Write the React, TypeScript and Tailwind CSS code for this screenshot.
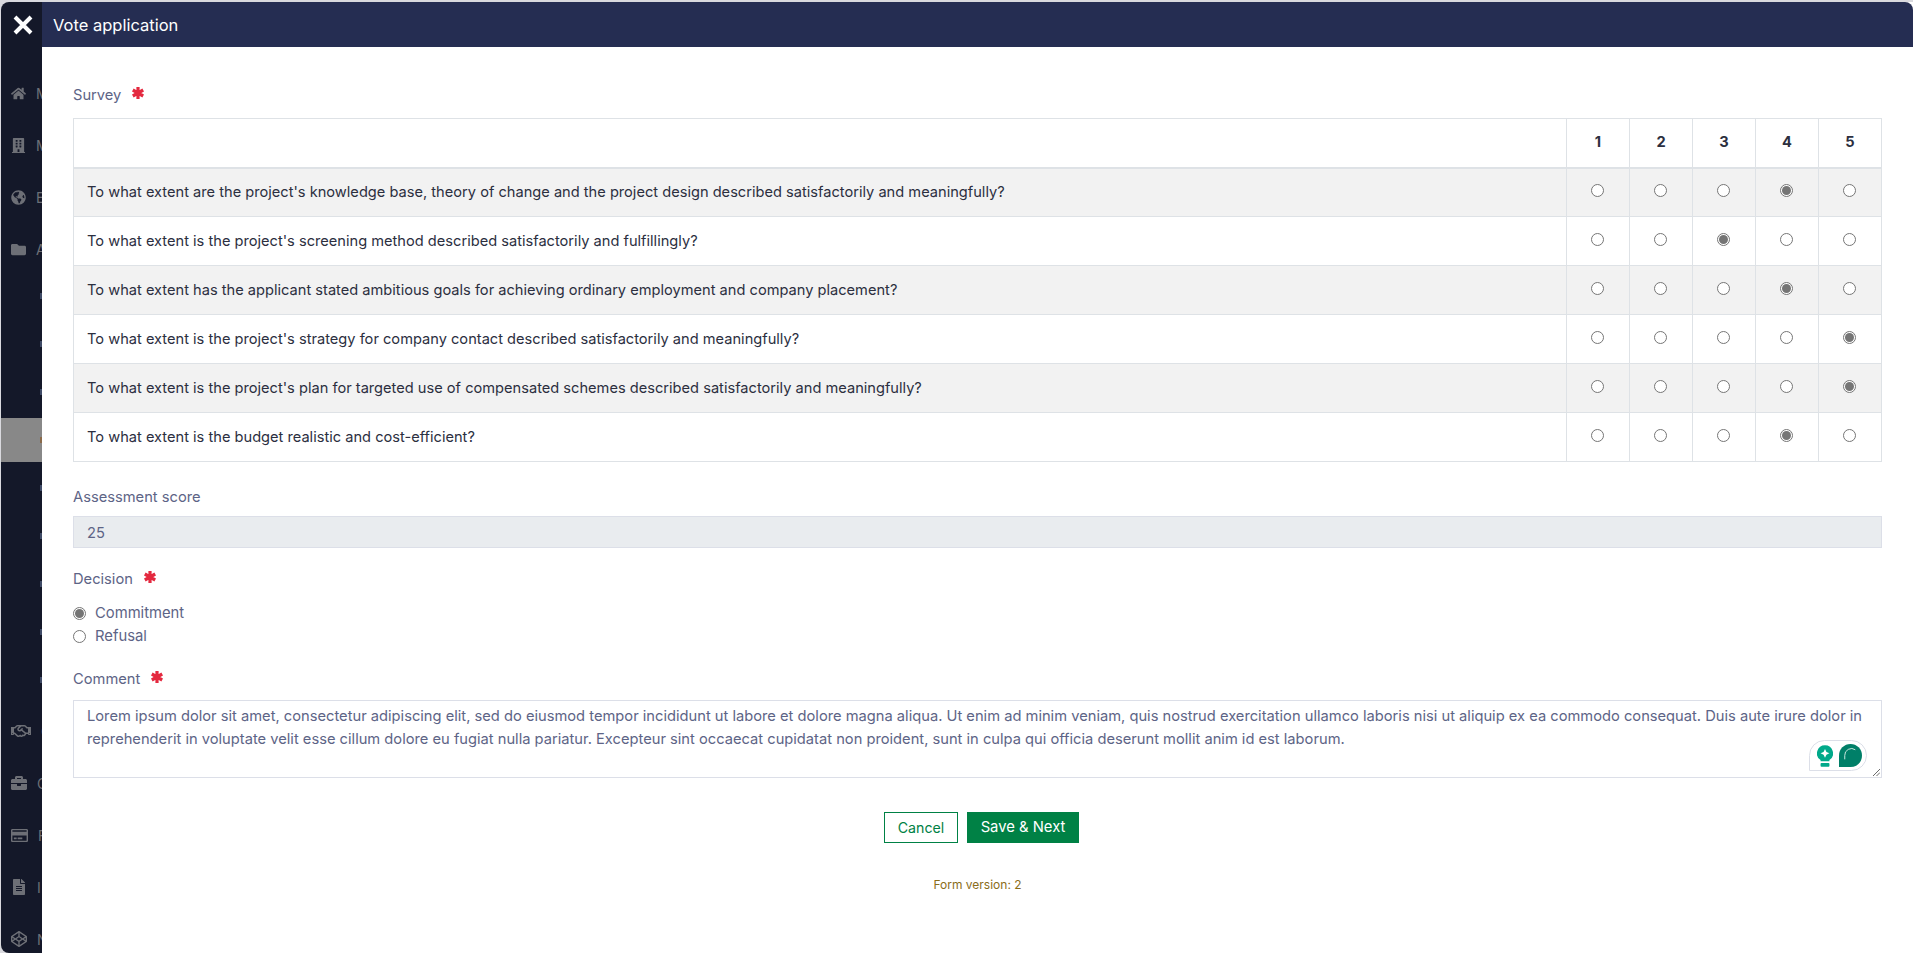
import type { ReactNode } from "react";
import { FaHome, FaBuilding, FaGlobeAmericas, FaFolder, FaRegHandshake, FaBriefcase, FaRegCreditCard, FaFileAlt, FaCodepen } from "react-icons/fa";

const questions = [
  { text: "To what extent are the project's knowledge base, theory of change and the project design described satisfactorily and meaningfully?", value: 4 },
  { text: "To what extent is the project's screening method described satisfactorily and fulfillingly?", value: 3 },
  { text: "To what extent has the applicant stated ambitious goals for achieving ordinary employment and company placement?", value: 4 },
  { text: "To what extent is the project's strategy for company contact described satisfactorily and meaningfully?", value: 5 },
  { text: "To what extent is the project's plan for targeted use of compensated schemes described satisfactorily and meaningfully?", value: 5 },
  { text: "To what extent is the budget realistic and cost-efficient?", value: 4 },
];

const Radio = ({ checked }: { checked?: boolean }) => (
  <span className="inline-flex h-[13px] w-[13px] items-center justify-center rounded-full border border-[#767676] bg-white">
    {checked && <span className="h-[9px] w-[9px] rounded-full bg-[#757575]" />}
  </span>
);

const Label = ({ children, required }: { children: string; required?: boolean }) => (
  <div className="flex h-[21px] items-center text-[14.7px] leading-[21px] text-[#5d6486]">
    <span className="h-[21px] pt-[1px]">{children}</span>
    {required && (
      <svg viewBox="0 0 14 14" className="mb-[4px] ml-[10px] h-[14px] w-[14px]">
        <path d="M7 1V13M1.8 4 12.2 10M12.2 4 1.8 10" stroke="#e4293f" strokeWidth="3.2" />
      </svg>
    )}
  </div>
);

const SideItem = ({ children }: { children: ReactNode }) => (
  <div className="flex h-[52px] shrink-0 items-center gap-[10px] whitespace-nowrap pl-[10px] text-[14px] text-[#6d6f76]">{children}</div>
);

const SubItem = ({ active }: { active?: boolean }) => (
  <div className="flex h-[48px] shrink-0 items-center">
    <div className={`flex h-[44px] w-full items-center justify-end ${active ? "bg-[#888888]" : ""}`}>
      <span className={`h-[6px] w-[2px] ${active ? "bg-[#8a6a4a]" : "bg-[#3f4a66]"}`} />
    </div>
  </div>
);

export default function App() {
  return (
    <div className="flex h-[953px] w-[1913px] overflow-hidden bg-[#d9d9de] pl-[1px] pt-[2px] font-['Inter','Noto_Sans',sans-serif]">
      <aside className="flex w-[41px] shrink-0 flex-col overflow-hidden rounded-l-[8px] bg-[#141829]">
        <div className="flex h-[45px] shrink-0 items-center pl-[12px]">
          <svg viewBox="0 0 20 20" className="h-[20px] w-[20px]">
            <path d="M2 2 18 18M18 2 2 18" stroke="#fff" strokeWidth="4" />
          </svg>
        </div>
        <div className="shrink-0 pt-[20px]">
          <SideItem><FaHome className="h-[15px] w-[15px] shrink-0" />M</SideItem>
          <SideItem><FaBuilding className="h-[15px] w-[15px] shrink-0" />M</SideItem>
          <SideItem><FaGlobeAmericas className="h-[15px] w-[15px] shrink-0" />E</SideItem>
          <SideItem><FaFolder className="h-[15px] w-[15px] shrink-0" />A</SideItem>
        </div>
        <div className="-mt-[3px] mb-[1px] shrink-0">
          {[0, 1, 2, 3, 4, 5, 6, 7, 8].map((i) => (
            <SubItem key={i} active={i === 3} />
          ))}
        </div>
        <SideItem><FaRegHandshake className="h-[20px] w-[20px] shrink-0" />C</SideItem>
        <SideItem><FaBriefcase className="h-[16px] w-[16px] shrink-0" />C</SideItem>
        <SideItem><FaRegCreditCard className="h-[17px] w-[17px] shrink-0" />F</SideItem>
        <SideItem><FaFileAlt className="h-[16px] w-[16px] shrink-0" />I</SideItem>
        <SideItem><FaCodepen className="h-[16px] w-[16px] shrink-0" />N</SideItem>
      </aside>
      <main className="min-w-0 flex-1 bg-white">
        <header className="flex h-[45px] items-center rounded-tr-[8px] bg-[#252d52] pl-[11px] pt-[2px] text-[16.5px] text-white">Vote application</header>
        <div className="px-[31px] pt-[37px]">
          <Label required>Survey</Label>
          <table className="mt-[13px] w-full table-fixed border-collapse text-[14.64px] text-[#2c2f3f]">
            <thead>
              <tr className="h-[49px] border-b-2 border-[#dee2e6]">
                <th className="border border-[#dee2e6]" />
                {[1, 2, 3, 4, 5].map((n) => (
                  <th key={n} className="w-[63px] border border-[#dee2e6] font-bold">{n}</th>
                ))}
              </tr>
            </thead>
            <tbody>
              {questions.map((q, i) => (
                <tr key={q.text} className={`h-[49px] ${i % 2 === 0 ? "bg-[#f2f2f2]" : "bg-white"}`}>
                  <td className="border border-[#dee2e6] px-[13px] pt-[1px]">{q.text}</td>
                  {[1, 2, 3, 4, 5].map((n) => (
                    <td key={n} className="border border-[#dee2e6] pr-[1px]">
                      <div className="flex justify-center pb-[3px]">
                        <Radio checked={q.value === n} />
                      </div>
                    </td>
                  ))}
                </tr>
              ))}
            </tbody>
          </table>
          <div className="mt-[24px]"><Label>Assessment score</Label></div>
          <div className="mt-[9px] flex h-[32px] items-center border border-[#dcdfe8] bg-[#e9ecef] px-[13px] pt-[2px] text-[14.7px] text-[#5d6486]">25</div>
          <div className="mt-[20px]"><Label required>Decision</Label></div>
          <div className="mt-[13px] flex flex-col text-[14.8px] leading-[23px] text-[#5d6486]">
            <div className="flex items-center gap-[9px]"><Radio checked /><span>Commitment</span></div>
            <div className="flex items-center gap-[9px]"><Radio /><span>Refusal</span></div>
          </div>
          <div className="mt-[20px]"><Label required>Comment</Label></div>
          <div className="relative mt-[11px] h-[78px] border border-[#dcdfe8] px-[13px] pt-[4px] text-[14.7px] leading-[23px] text-[#5d6486]">
            Lorem ipsum dolor sit amet, consectetur adipiscing elit, sed do eiusmod tempor incididunt ut labore et dolore magna aliqua. Ut enim ad minim veniam, quis nostrud exercitation ullamco laboris nisi ut aliquip ex ea commodo consequat. Duis aute irure dolor in reprehenderit in voluptate velit esse cillum dolore eu fugiat nulla pariatur. Excepteur sint occaecat cupidatat non proident, sunt in culpa qui officia deserunt mollit anim id est laborum.
            <div className="absolute bottom-[6px] right-[14px] flex h-[31px] w-[58px] items-center gap-[6px] rounded-r-[16px] rounded-tl-[16px] border border-[#dcdfe8] bg-white pl-[7px]">
              <svg viewBox="0 0 18 24" className="h-[22px] w-[16px]">
                <path d="M9 0A9 9 0 0 1 14 16.5V18H4V16.5A9 9 0 0 1 9 0Z" fill="#00a98a" />
                <path d="M9 4 10.6 7.4 14 9 10.6 10.6 9 14 7.4 10.6 4 9 7.4 7.4Z" fill="#fff" />
                <rect x="4" y="20" width="10" height="4" rx="1" fill="#00a98a" />
              </svg>
              <svg viewBox="0 0 24 24" className="h-[23px] w-[23px]">
                <path d="M0 24V12A12 12 0 0 1 24 12C24 19 19 24 12 24Z" fill="#007f68" />
                <path d="M6 16V12A7 7 0 0 1 17 6" fill="none" stroke="#cfe9e2" strokeWidth="1" />
              </svg>
            </div>
            <svg viewBox="0 0 8 8" className="absolute bottom-[1px] right-[1px] h-[7px] w-[7px]">
              <path d="M0 8 8 0M4 8 8 4" stroke="#555" strokeWidth="1" />
            </svg>
          </div>
          <div className="mt-[34px] flex justify-center gap-[9px] pl-[8px] text-[14.2px]">
            <button className="h-[31px] w-[74px] border border-[#008145] bg-white text-[#008145]">Cancel</button>
            <button className="h-[31px] w-[112px] bg-[#008145] text-[14.8px] text-white">Save &amp; Next</button>
          </div>
          <p className="mt-[33px] text-center text-[12px] text-[#8a6d1a]">Form version: 2</p>
        </div>
      </main>
    </div>
  );
}
